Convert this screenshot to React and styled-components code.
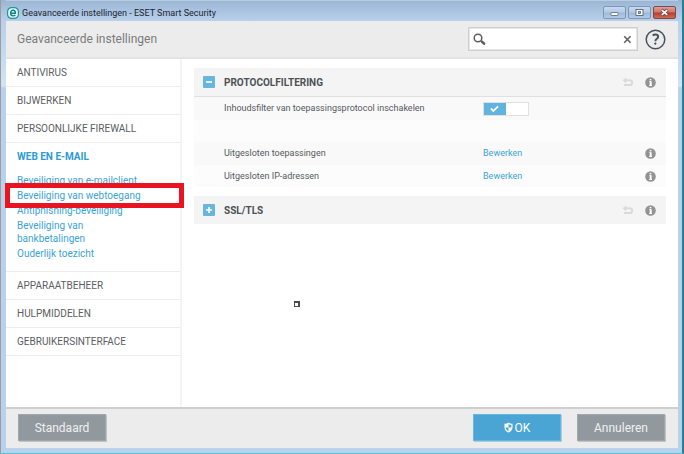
import React, { useState } from "react";
import styled, { createGlobalStyle } from "styled-components";

const Global = createGlobalStyle`
  *, *::before, *::after { box-sizing: border-box; }
  body { margin: 0; font-family: Roboto, "Open Sans", sans-serif; font-size: 9px; color: #55595e; }
  button, input { font: inherit; color: inherit; margin: 0; }
  button { padding: 0; border: 0; background: none; cursor: pointer; }
  a { text-decoration: none; }
  svg { display: block; flex: none; }
`;

const Frame = styled.div`
  position: relative;
  min-height: 100vh;
  display: flex;
  flex-direction: column;
  padding: 0 4px 5px 5px;
  border-left: 1px solid #9b9da2;
  border-right: 2px solid #2a7e93;
  border-bottom: 1px solid #4fbfdc;
  background: linear-gradient(#9ab5d4 0, #b8d0ea 21px, #d3e3f3 86px, #b9d1ea 88px);
`;

const TitleBar = styled.header`
  height: 21px;
  display: flex;
  align-items: center;
  gap: 3px;
  padding: 3px 2px 0 1px;
  border-top: 1px solid #b9cde2;
  color: #1a2530;
`;

const WindowTitle = styled.div`
  flex: 1;
  font-size: 9px;
  line-height: 14px;
  white-space: nowrap;
`;

const WindowButtons = styled.div`
  display: flex;
  gap: 2px;
`;

const WindowButton = styled.button`
  width: 23px;
  height: 13px;
  display: flex;
  align-items: center;
  justify-content: center;
  border: 1px solid ${(p) => (p.$close ? "#7d4850" : "#7f97b4")};
  border-radius: 2px;
  background: ${(p) =>
    p.$close
      ? "linear-gradient(#dfa096 0, #cf7466 48%, #b93b29 52%, #cf6c50 100%)"
      : "linear-gradient(#c6d9ee 0, #b3cae4 48%, #9db9d8 52%, #b2cbe6 100%)"};
`;

const Client = styled.div`
  flex: 1;
  display: flex;
  flex-direction: column;
  background: #fff;
`;

const TopBar = styled.div`
  height: 38px;
  display: flex;
  align-items: center;
  gap: 7px;
  padding: 0 12px 0 11px;
  background: #ececec;
  border-bottom: 2px solid #e3e3e3;
`;

const Heading = styled.h1`
  flex: 1;
  margin: 0;
  font-size: 12px;
  line-height: 16px;
  font-weight: 400;
  color: #7a7c7e;
`;

const SearchBox = styled.label`
  width: 170px;
  height: 24px;
  display: flex;
  align-items: center;
  padding: 0 5px 0 4px;
  background: #fff;
  border: 1px solid #cfcfcf;
  box-shadow: inset 0 0 0 1px #e6e6e6;
`;

const SearchInput = styled.input`
  flex: 1;
  min-width: 0;
  border: 0;
  outline: 0;
  background: transparent;
  font-size: 12px;
`;

const IconButton = styled.button`
  display: flex;
`;

const Body = styled.div`
  flex: 1;
  display: flex;
`;

const Sidebar = styled.nav`
  width: 176px;
  border-right: 2px solid #f4f4f4;
`;

const Section = styled.div`
  border-bottom: 1px solid #ededed;
`;

const SectionLink = styled.a`
  display: block;
  padding: 0 11px;
  font-size: 10px;
  line-height: 27px;
  color: ${(p) => (p.$active ? "#2d9bd6" : "#5b5e62")};
  font-weight: ${(p) => (p.$active ? 700 : 400)};
`;

const SubList = styled.ul`
  margin: 0;
  padding: 4px 32px 11px 11px;
  list-style: none;
  display: flex;
  flex-direction: column;
  gap: 2px;
`;

const SubItem = styled.li`
  position: relative;
  line-height: 13px;
  font-size: 10px;
`;

const TextLink = styled.a`
  color: #3ba3d8;
`;

const Marker = styled.span`
  position: absolute;
  z-index: 1;
  top: -6px;
  left: -12px;
  width: 179px;
  height: 25px;
  border: 5px solid #ea1420;
  pointer-events: none;
`;

const Main = styled.main`
  flex: 1;
  min-width: 0;
  display: flex;
  flex-direction: column;
  gap: 9px;
  padding: 9px 12px 12px;
`;

const GroupHead = styled.div`
  display: flex;
  align-items: center;
  height: 28px;
  padding: 0 10px 0 9px;
  background: #f4f4f4;
`;

const Fold = styled.button`
  width: 12px;
  height: 12px;
  display: flex;
  align-items: center;
  justify-content: center;
  background: #66b6df;
  border-radius: 1px;
`;

const GroupTitle = styled.h2`
  flex: 1;
  margin: 0 0 0 9px;
  font-size: 10px;
  line-height: 13px;
  font-weight: 700;
  color: #4c5156;
`;

const HeadActions = styled.div`
  display: flex;
  align-items: center;
  gap: 12px;
`;

const Rows = styled.div`
  border-top: 1px solid #e0e0e0;
`;

const Row = styled.div`
  display: grid;
  grid-template-columns: 259px 1fr auto;
  align-items: center;
  height: ${(p) => (p.$shaded ? 23 : 22)}px;
  padding: 0 10px 0 30px;
  background: ${(p) => (p.$shaded ? "#f9f9f9" : "#fcfcfc")};
`;

const RowLabel = styled.label`
  font-size: 9px;
  line-height: 13px;
  white-space: nowrap;
`;

const RowValue = styled.div`
  font-size: 9px;
  line-height: 13px;
`;

const Toggle = styled.span`
  position: relative;
  display: flex;
  width: 46px;
  height: 14px;
  & > svg { position: absolute; top: 3px; left: 7px; pointer-events: none; }
`;

const ToggleInput = styled.input`
  appearance: none;
  width: 100%;
  height: 100%;
  border: 1px solid #e0e0e0;
  background: #fff;
  &:checked { background: linear-gradient(90deg, #5fb3de 22px, #fff 22px); }
`;

const Footer = styled.footer`
  display: flex;
  gap: 16px;
  height: 41px;
  padding: 5px 13px 8px 12px;
  background: #ececec;
  border-top: 2px solid #cfcfcf;
`;

const ActionButton = styled.button`
  width: 88px;
  height: 27px;
  display: flex;
  align-items: center;
  justify-content: center;
  gap: 2px;
  font-size: 12px;
  color: ${(p) => (p.$primary ? "#fff" : "#eef0f1")};
  background: ${(p) => (p.$primary ? "#4aa5d5" : "#92999e")};
  border: 1px solid ${(p) => (p.$primary ? "#68b5dd" : "#a0a6aa")};
  box-shadow: 1px 1px 0 ${(p) => (p.$primary ? "#a5cde2" : "#bfc3c5")};
`;

const Spacer = styled.span`
  flex: 1;
`;

const PointerMark = styled.span`
  position: absolute;
  left: 293px;
  top: 301px;
  width: 6px;
  height: 6px;
  border: 1px solid #4b4b4b;
  border-width: 2px 2px 1px 1px;
  background: #fff;
`;

const EsetIcon = () => (
  <svg width="12" height="12" viewBox="0 0 12 12">
    <rect x=".6" y=".6" width="10.8" height="10.8" rx="4" fill="#e9f6f6" stroke="#17989b" strokeWidth="1.2" />
    <path d="M3.7 6.2h4.700c0-2-.8-3-2.300-3S3.600 4.400 3.600 6.100s1 2.800 2.500 2.800c1 0 1.700-.3 2.200-1" fill="none" stroke="#108587" strokeWidth="1.400" />
  </svg>
);

const MinimizeIcon = () => (
  <svg width="9" height="9" viewBox="0 0 9 9">
    <rect x="1" y="4.500" width="7" height="3" rx=".5" fill="#fff" stroke="#56677c" strokeWidth=".8" />
  </svg>
);

const MaximizeIcon = () => (
  <svg width="9" height="9" viewBox="0 0 9 9">
    <rect x="1" y="1.500" width="7" height="6" fill="#fff" stroke="#56677c" strokeWidth=".9" />
    <rect x="3.500" y="3.500" width="2" height="2" fill="#9db9d8" stroke="#56677c" strokeWidth=".8" />
  </svg>
);

const CloseIcon = () => (
  <svg width="9" height="9" viewBox="0 0 9 9">
    <path d="M1.500 1.800l6 5.400M7.500 1.800l-6 5.400" stroke="#6b4148" strokeWidth="3.200" />
    <path d="M1.800 2.100l5.400 4.800M7.200 2.100l-5.400 4.800" stroke="#fff" strokeWidth="1.800" />
  </svg>
);

const SearchIcon = () => (
  <svg width="13" height="13" viewBox="0 0 13 13" fill="none" stroke="#5c5f62">
    <circle cx="5" cy="5" r="3.800" strokeWidth="1.500" />
    <path d="M8 7.800l1.500 1.300" strokeWidth="1.600" />
    <path d="M9.300 9l1.800 1.600" strokeWidth="2.600" strokeLinecap="round" />
  </svg>
);

const ClearIcon = () => (
  <svg width="9" height="9" viewBox="0 0 9 9">
    <path d="M1.200 1.200l6.400 6.600M7.600 1.200L1.200 7.800" stroke="#5c5f62" strokeWidth="1.500" />
  </svg>
);

const HelpIcon = () => (
  <svg width="21" height="21" viewBox="0 0 21 21" fill="none" stroke="#47525c">
    <circle cx="10.500" cy="10.500" r="9.300" strokeWidth="1.500" />
    <path d="M7.700 6.600c.8-.7 1.700-1 2.700-1 1.700 0 2.700.8 2.700 2.100 0 1.100-.5 1.700-1.500 2.300-.9.600-1.200 1-1.200 2.200" strokeWidth="2" />
    <circle cx="10.300" cy="14.600" r=".8" fill="#47525c" strokeWidth=".8" />
  </svg>
);

const UndoIcon = () => (
  <svg width="11" height="11" viewBox="0 0 11 11">
    <path d="M3 3.300h4.700a2.200 2.200 0 0 1 0 4.700H2" fill="none" stroke="#dadada" strokeWidth="2" />
    <path d="M.5 3.300L4.200.4v5.800z" fill="#dadada" />
  </svg>
);

const InfoIcon = () => (
  <svg width="11" height="11" viewBox="0 0 11 11">
    <circle cx="5.500" cy="5.500" r="5.300" fill="#939393" />
    <path d="M4.400 4.600h1.700v3.800M4.200 8.500h2.800" fill="none" stroke="#fff" strokeWidth=".9" />
    <rect x="4.700" y="4.300" width="1.600" height="4.300" fill="#fff" />
    <rect x="4.700" y="1.900" width="1.600" height="1.500" fill="#fff" />
  </svg>
);

const CheckIcon = () => (
  <svg width="9" height="8" viewBox="0 0 9 8">
    <path d="M.9 3.500l2.400 2.400L8.100 1.300" fill="none" stroke="#fff" strokeWidth="1.800" />
  </svg>
);

const FoldIcon = ({ open }) => (
  <svg width="8" height="8" viewBox="0 0 8 8">
    <path d={open ? "M1 4h6" : "M1 4h6M4 1v6"} stroke="#fff" strokeWidth="1.600" />
  </svg>
);

const ShieldIcon = () => (
  <svg width="9" height="11" viewBox="0 0 9 11">
    <path d="M4.500.4C3.400 1.300 1.900 1.800.5 1.800v3.400c0 2.400 1.500 4.300 4 5.400 2.500-1.100 4-3 4-5.400V1.800C7.100 1.800 5.600 1.300 4.500.4z" fill="#fff" />
    <path d="M4.500 2v3.500H7.400V2.900C6.300 2.900 5.300 2.600 4.500 2zM4.500 5.500H1.600c.1 1.700 1.200 2.900 2.900 3.900z" fill="#4aa5d5" />
  </svg>
);

const sections = [
  { title: "ANTIVIRUS" },
  { title: "BIJWERKEN" },
  { title: "PERSOONLIJKE FIREWALL" },
  {
    title: "WEB EN E-MAIL",
    items: [
      "Beveiliging van e-mailclient",
      "Beveiliging van webtoegang",
      "Antiphishing-beveiliging",
      "Beveiliging van bankbetalingen",
      "Ouderlijk toezicht",
    ],
    marked: 1,
  },
  { title: "APPARAATBEHEER" },
  { title: "HULPMIDDELEN" },
  { title: "GEBRUIKERSINTERFACE" },
];

function Info() {
  return (
    <IconButton aria-label="Informatie">
      <InfoIcon />
    </IconButton>
  );
}

function GroupHeader({ title, open, onToggle }) {
  return (
    <GroupHead>
      <Fold aria-label={title} aria-expanded={open} onClick={onToggle}>
        <FoldIcon open={open} />
      </Fold>
      <GroupTitle>{title}</GroupTitle>
      <HeadActions>
        <IconButton aria-label="Herstellen">
          <UndoIcon />
        </IconButton>
        <Info />
      </HeadActions>
    </GroupHead>
  );
}

function EditRow({ label, shaded }) {
  return (
    <Row $shaded={shaded}>
      <RowLabel as="span">{label}</RowLabel>
      <RowValue>
        <TextLink href="#bewerken">Bewerken</TextLink>
      </RowValue>
      <Info />
    </Row>
  );
}

export default function App() {
  const [filtering, setFiltering] = useState(true);
  const [protocolOpen, setProtocolOpen] = useState(true);
  const [sslOpen, setSslOpen] = useState(false);
  const [query, setQuery] = useState("");

  return (
    <>
      <Global />
      <Frame>
        <TitleBar>
          <EsetIcon />
          <WindowTitle>Geavanceerde instellingen - ESET Smart Security</WindowTitle>
          <WindowButtons>
            <WindowButton aria-label="Minimaliseren"><MinimizeIcon /></WindowButton>
            <WindowButton aria-label="Maximaliseren"><MaximizeIcon /></WindowButton>
            <WindowButton $close aria-label="Sluiten"><CloseIcon /></WindowButton>
          </WindowButtons>
        </TitleBar>
        <Client>
          <TopBar>
            <Heading>Geavanceerde instellingen</Heading>
            <SearchBox>
              <SearchIcon />
              <SearchInput aria-label="Zoeken" value={query} onChange={(e) => setQuery(e.target.value)} />
              <IconButton aria-label="Wissen" onClick={() => setQuery("")}><ClearIcon /></IconButton>
            </SearchBox>
            <IconButton aria-label="Help"><HelpIcon /></IconButton>
          </TopBar>
          <Body>
            <Sidebar>
              {sections.map(({ title, items, marked }) => (
                <Section key={title}>
                  <SectionLink href="#sectie" $active={Boolean(items)}>{title}</SectionLink>
                  {items && (
                    <SubList>
                      {items.map((item, i) => (
                        <SubItem key={item}>
                          <TextLink href="#onderdeel">{item}</TextLink>
                          {i === marked && <Marker />}
                        </SubItem>
                      ))}
                    </SubList>
                  )}
                </Section>
              ))}
            </Sidebar>
            <Main>
              <section>
                <GroupHeader title="PROTOCOLFILTERING" open={protocolOpen} onToggle={() => setProtocolOpen(!protocolOpen)} />
                {protocolOpen && (
                  <Rows>
                    <Row $shaded>
                      <RowLabel htmlFor="filter">Inhoudsfilter van toepassingsprotocol inschakelen</RowLabel>
                      <Toggle>
                        <ToggleInput id="filter" type="checkbox" checked={filtering} onChange={(e) => setFiltering(e.target.checked)} />
                        {filtering && <CheckIcon />}
                      </Toggle>
                    </Row>
                    <Row />
                    <EditRow shaded label="Uitgesloten toepassingen" />
                    <EditRow label="Uitgesloten IP-adressen" />
                  </Rows>
                )}
              </section>
              <section>
                <GroupHeader title="SSL/TLS" open={sslOpen} onToggle={() => setSslOpen(!sslOpen)} />
              </section>
            </Main>
          </Body>
          <Footer>
            <ActionButton>Standaard</ActionButton>
            <Spacer />
            <ActionButton $primary><ShieldIcon />OK</ActionButton>
            <ActionButton>Annuleren</ActionButton>
          </Footer>
        </Client>
        <PointerMark />
      </Frame>
    </>
  );
}
